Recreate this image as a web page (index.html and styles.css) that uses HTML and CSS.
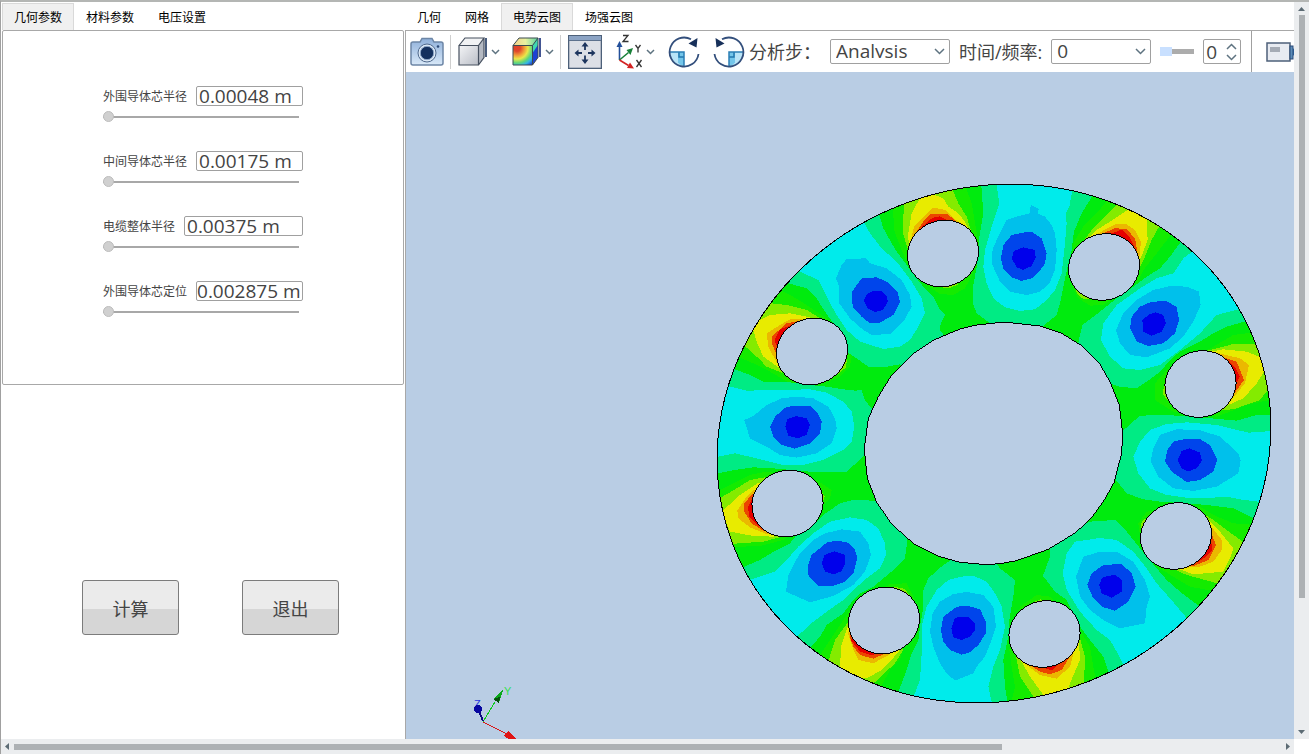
FILE: index.html
```html
<!DOCTYPE html>
<html lang="zh-CN">
<head>
<meta charset="utf-8">
<title>电势云图</title>
<link rel="stylesheet" href="styles.css">
</head>
<body>
<div class="window">
  <div class="content">
    <section class="side">
      <nav class="tabs">
        <button class="tab active" type="button">几何参数</button>
        <button class="tab" type="button">材料参数</button>
        <button class="tab" type="button">电压设置</button>
      </nav>
      <form class="params">
        <div class="param">
          <div class="param-row"><label for="p1">外围导体芯半径</label><input class="value" id="p1" type="text" value="0.00048 m"></div>
          <input class="slider" type="range" min="0" max="100" value="0" aria-label="外围导体芯半径">
        </div>
        <div class="param">
          <div class="param-row"><label for="p2">中间导体芯半径</label><input class="value" id="p2" type="text" value="0.00175 m"></div>
          <input class="slider" type="range" min="0" max="100" value="0" aria-label="中间导体芯半径">
        </div>
        <div class="param">
          <div class="param-row"><label for="p3">电缆整体半径</label><input class="value" id="p3" type="text" value="0.00375 m"></div>
          <input class="slider" type="range" min="0" max="100" value="0" aria-label="电缆整体半径">
        </div>
        <div class="param">
          <div class="param-row"><label for="p4">外围导体芯定位</label><input class="value full" id="p4" type="text" value="0.002875 m"></div>
          <input class="slider" type="range" min="0" max="100" value="0" aria-label="外围导体芯定位">
        </div>
      </form>
      <div class="actions">
        <button class="push" type="button">计算</button>
        <button class="push" type="button">退出</button>
      </div>
    </section>

    <section class="main">
      <nav class="tabs">
        <button class="tab" type="button">几何</button>
        <button class="tab" type="button">网格</button>
        <button class="tab active" type="button">电势云图</button>
        <button class="tab" type="button">场强云图</button>
      </nav>
      <div class="toolbar">
        <button class="tool" type="button" aria-label="截图">
          <svg width="34" height="30" viewBox="0 0 34 30">
            <defs><linearGradient id="cam" x1="0" y1="0" x2="0" y2="1"><stop offset="0" stop-color="#8fb0da"/><stop offset="1" stop-color="#d8e8f8"/></linearGradient></defs>
            <path d="M1 7q0-2 2-2h7l2-3.500h10l2 3.500h7q2 0 2 2v19q0 2-2 2h-28q-2 0-2-2z" fill="url(#cam)" stroke="#6d86a6" stroke-width="1.500"/>
            <circle cx="17" cy="16" r="9" fill="#dce9f7" stroke="#50698c"/>
            <circle cx="17" cy="16" r="6.700" fill="#14305e" stroke="#8fa8c8"/>
            <circle cx="28" cy="9.500" r="1.300" fill="#2d4a78"/>
          </svg>
        </button>
        <span class="sep"></span>
        <button class="tool menu" type="button" aria-label="显示模式">
          <svg width="30" height="32" viewBox="0 0 30 32">
            <defs><linearGradient id="cube" x1="0" y1="0" x2="1" y2="1"><stop offset="0" stop-color="#f4f5f7"/><stop offset="1" stop-color="#b9bdc6"/></linearGradient></defs>
            <path d="M1 9.500h19.500v19.500h-19.500z" fill="url(#cube)"/><path d="M1 9.500l6-7.500h19l-5.500 7.500z" fill="#f1f2f4"/><path d="M20.500 9.500l5.500-7.500v19.500l-5.500 7.500z" fill="#b4b9c2"/>
            <path d="M1 9.500h19.500v19.500h-19.500zM1 9.500l6-7.500h19l-5.500 7.500M26 2v19.500l-5.500 7.500" fill="none" stroke="#46505f" stroke-width="1.200"/><path d="M28 2v19" stroke="#1d355e" stroke-width="1.600"/>
          </svg>
          <svg class="chev" width="9" height="6" viewBox="0 0 9 6"><path d="M1 1l3.500 3.500l3.500-3.500"/></svg>
        </button>
        <button class="tool menu" type="button" aria-label="云图">
          <svg width="30" height="32" viewBox="0 0 30 32">
            <defs><radialGradient id="heat" gradientUnits="userSpaceOnUse" cx="5" cy="12" r="22"><stop offset="0.150" stop-color="#e0442a"/><stop offset="0.350" stop-color="#f1a33a"/><stop offset="0.500" stop-color="#e9e84a"/><stop offset="0.680" stop-color="#5fd67a"/><stop offset="0.820" stop-color="#35b6e8"/><stop offset="1" stop-color="#1c3cd0"/></radialGradient>
            <linearGradient id="top" x1="0" y1="0" x2="1" y2="0"><stop offset="0" stop-color="#f3cf8b"/><stop offset="0.500" stop-color="#e9f2a0"/><stop offset="1" stop-color="#55d5a0"/></linearGradient></defs>
            <path d="M1 9.500h19.500v19.500h-19.500z" fill="url(#heat)"/><path d="M1 9.500l6-7.500h19l-5.500 7.500z" fill="url(#top)"/><path d="M20.500 9.500l5.500-7.500v19.500l-5.500 7.500z" fill="#1d42d4"/><path d="M20.500 9.500l5.500-7.500v7l-5.500 8z" fill="#3fd7b0"/>
            <path d="M1 9.500h19.500v19.500h-19.500zM1 9.500l6-7.500h19l-5.500 7.500M26 2v19.500l-5.500 7.500" fill="none" stroke="#3c4a50"/><path d="M28 2v19" stroke="#142a78" stroke-width="1.600"/>
          </svg>
          <svg class="chev" width="9" height="6" viewBox="0 0 9 6"><path d="M1 1l3.500 3.500l3.500-3.500"/></svg>
        </button>
        <span class="sep"></span>
        <button class="tool" type="button" aria-label="适应窗口">
          <svg width="34" height="34" viewBox="0 0 34 34">
            <rect x="0.500" y="0.500" width="33" height="33" fill="#dcdfe6" stroke="#4d6079" stroke-width="1.600"/><rect x="1" y="1" width="32" height="4" fill="#8ba3c4"/><path d="M1 5.500h32" stroke="#5d718d"/>
            <g stroke="#1d355e" stroke-width="1.800" fill="#1d355e"><path d="M17 9.500v5.500M17 20.500v5.500M8.500 18h5.500M20 18h5.500"/><path d="M17 7l-3.500 4.500h7zM17 29l-3.500-4.500h7zM6.500 18l4-3.500v7zM27.500 18l-4-3.500v7z" stroke="none"/></g>
          </svg>
        </button>
        <button class="tool menu axes" type="button" aria-label="视图方向">
          <svg width="27" height="36" viewBox="0 0 27 36">
            <path d="M3.500 26v-15" stroke="#24509a" stroke-width="1.600"/><path d="M3.500 7l-3 6h6z" fill="#24509a"/>
            <path d="M3.500 26l9-7.500" stroke="#188038" stroke-width="1.600"/><path d="M17 14l-6.500 2l4 5z" fill="#188038"/>
            <path d="M3.500 26l9 5.500" stroke="#d32222" stroke-width="1.600"/><path d="M18 34.500l-7-.5l3-5.500z" fill="#d32222"/>
            <path d="M7 1.500h5l-5 6h5.500M19.500 11l2.500 3.500l2.500-3.500M22 14.500v4M20.500 26l5 7M25.500 26l-5 7" fill="none" stroke="#333" stroke-width="1.300"/>
          </svg>
          <svg class="chev" width="9" height="6" viewBox="0 0 9 6"><path d="M1 1l3.500 3.500l3.500-3.500"/></svg>
        </button>
        <button class="tool turn" type="button" aria-label="顺时针旋转">
          <svg width="32" height="32" viewBox="0 0 32 32">
            <path d="M1.500 16h14.500v14.500a14.500 14.500 0 0 1-14.500-14.500z" fill="#b9e4f7"/><path d="M10 16h6v14.500q-4-1-6-4z" fill="#74c6ea"/><path d="M11 16v5h5" fill="none" stroke="#2277ad" stroke-width="1.500"/><path d="M1.500 16h14.500v14.500" fill="none" stroke="#2b7fb5" stroke-width="1.500"/>
            <path d="M23 3.300a14.500 14.500 0 1 0 7.500 14.700" fill="none" stroke="#334f7c" stroke-width="1.800"/><path d="M29.500 2l-1 9.500l-8-4z" fill="#17305a"/>
          </svg>
        </button>
        <button class="tool turn" type="button" aria-label="逆时针旋转">
          <svg width="32" height="32" viewBox="0 0 32 32">
            <path d="M30.500 16h-14.500v14.500a14.500 14.500 0 0 0 14.500-14.500z" fill="#b9e4f7"/><path d="M22 16h-6v14.500q4-1 6-4z" fill="#74c6ea"/><path d="M21 16v5h-5" fill="none" stroke="#2277ad" stroke-width="1.500"/><path d="M30.500 16h-14.500v14.500" fill="none" stroke="#2b7fb5" stroke-width="1.500"/>
            <path d="M9 3.300a14.500 14.500 0 1 1-7.500 14.700" fill="none" stroke="#334f7c" stroke-width="1.800"/><path d="M2.500 2l1 9.500l8-4z" fill="#17305a"/>
          </svg>
        </button>
        <label class="caption step-caption" for="step">分析步：</label>
        <span class="combo step"><select id="step"><option>Analysis</option></select><svg class="chev" width="11" height="7" viewBox="0 0 11 7"><path d="M1 1l4.500 4.500l4.500-4.500"/></svg></span>
        <label class="caption" for="time">时间/频率:</label>
        <span class="combo time"><select id="time"><option>0</option></select><svg class="chev" width="11" height="7" viewBox="0 0 11 7"><path d="M1 1l4.500 4.500l4.500-4.500"/></svg></span>
        <input class="frame-slider" type="range" min="0" max="10" value="0" aria-label="帧">
        <span class="spin">
          <input type="text" value="0" aria-label="帧号">
          <span class="spin-btns">
            <button type="button" aria-label="增加"><svg width="11" height="7" viewBox="0 0 11 7"><path d="M1 6l4.500-4.500l4.500 4.500"/></svg></button>
            <button type="button" aria-label="减少"><svg width="11" height="7" viewBox="0 0 11 7"><path d="M1 1l4.500 4.500l4.500-4.500"/></svg></button>
          </span>
        </span>
        <span class="sep dark"></span>
        <button class="tool video" type="button" aria-label="录制">
          <svg width="34" height="20" viewBox="0 0 34 20">
            <rect x="1" y="1" width="23" height="18" fill="#e8ebf1" stroke="#4d6079" stroke-width="1.500"/><rect x="4" y="5" width="10" height="5" fill="#a5abb5"/><rect x="24" y="4" width="3" height="13" fill="#5b8cb8" stroke="#2a4a78"/><path d="M27 7l6-5v16l-6-5z" fill="#2a5a90"/>
          </svg>
        </button>
      </div>

      <div class="viewport">
        <svg class="scene" viewBox="406 72 888 667" shape-rendering="crispEdges">
          <defs><clipPath id="disc"><ellipse rx="280" ry="256" transform="translate(994 443.500) rotate(-21.500)"/></clipPath></defs>
          <g clip-path="url(#disc)">
            <rect x="700" y="170" width="590" height="550" fill="#00eb0e"/>
            <g transform="translate(710 170) scale(.33333)">
              <path class="c6" d="M548 80L552 180 575 240 600 300 650 345 690 372 730 375 765 355 800 290 806 220 795 160 785 100 760 30zM170 340L240 375 290 405 350 445 400 500 425 560 420 590 390 620 330 645 240 640 180 605 130 580 60 550z"/>
              <path class="c4" d="M200 325L235 340 290 355 320 385 345 425 370 460 400 500 410 545 440 565 475 590 530 590 570 583 640 620 720 520 690 480 692 460 705 435 690 420 670 380 640 350 600 300 590 285 560 245 545 220 520 175 505 125 480 100z"/>
              <path class="c3" d="M240 290L270 305 325 330 355 390 380 435 410 480 450 515 520 537 570 530 600 510 625 470 645 430 635 385 605 335 560 275 515 235 480 190 455 145 400 130z"/>
              <path class="c2" d="M410 267L468 265 480 280 530 295 575 330 600 375 605 410 580 455 540 492 485 495 460 480 420 445 388 400 388 350 378 325 395 285z"/>
              <path class="c1" d="M455 325L500 322 530 335 563 368 570 395 550 435 510 458 480 460 455 440 428 412 426 365z"/>
              <path class="c0" d="M490 363L515 363 530 380 534 395 518 420 495 426 472 415 462 392 470 373z"/>
              <path class="c4" d="M50 590L72 597 120 615 160 635 240 637 300 645 350 650 400 658 435 662 455 660 465 690 500 735 500 850 462 858 410 905 300 905 190 895 130 892 75 900 0 915z"/>
              <path class="c3" d="M30 645L55 648 110 662 200 660 300 658 350 668 400 695 425 725 433 770 425 815 400 840 340 870 280 885 220 885 140 865 75 850 0 865z"/>
              <path class="c2" d="M215 685L260 680 310 685 355 710 375 745 380 775 365 820 320 850 260 863 210 855 170 830 120 805 103 750 130 738 170 705z"/>
              <path class="c1" d="M230 710L300 707 320 725 335 755 330 790 300 820 255 836 215 825 190 800 180 770 195 740z"/>
              <path class="c0" d="M258 738L290 745 300 765 290 795 262 805 235 797 226 770 232 748z"/>
              <path class="c7" d="M583 80L578 185 592 235 700 250 785 190 770 140 745 100 722 45zM690 345L700 354 720 354 745 343zM165 398L230 405 290 420 335 447 305 544 215 608 170 590 140 560 90 515zM411 570L408 592 385 612 305 544z"/>
              <path class="c8" d="M635 75L605 130 593 200 600 225 700 250 775 175 765 155 745 130 715 110 700 85 675 75zM145 452L180 435 240 430 300 442 305 544 205 592 160 560 140 515 130 480z"/>
              <path class="c9" d="M603 210L612 170 640 140 670 113 705 120 730 145 762 165 700 250zM290 446L240 448 210 465 170 490 175 530 200 577 305 544z"/>
              <path class="c10" d="M618 187L640 155 660 132 710 131 738 153 700 250zM262 454L230 460 185 500 185 520 201 555 305 544z"/>
              <path class="c11" d="M636 170L668 143 690 139 715 152 700 250zM242 466L210 478 193 510 202 532 305 544z"/>
            </g>
            <g transform="translate(1000 170) scale(.33333)">
              <path class="c6" d="M330 80L290 130 250 170 222 215 205 300 215 345 235 385 270 407 310 405 415 330 430 300 470 250 520 185zM780 485L700 495 640 530 500 600 465 640 465 690 520 725 650 740 690 725 740 705 830 685z"/>
              <path class="c4" d="M-58 20L-50 130-62 200-70 290-80 345-82 400-70 430-10 475 115 480 170 435 180 400 190 350 205 280 215 240 222 185 245 130 285 65z"/>
              <path class="c3" d="M220 45L208 110 197 130 200 160 195 220 185 310 165 360 140 390 105 418 60 423 15 412-20 385-40 340-50 290-45 240-25 170-2 100-12 30z"/>
              <path class="c2" d="M92 105L117 117 112 130 135 140 155 165 165 190 170 240 165 300 148 340 120 365 80 375 30 365 0 335-25 280-22 235 0 190 20 150 50 140 90 130z"/>
              <path class="c1" d="M75 187L98 187 125 205 140 250 135 280 118 305 95 325 65 333 35 322 10 295 3 265 10 225 35 195z"/>
              <path class="c0" d="M70 232L105 240 107 262 95 288 70 300 50 292 35 265 42 243z"/>
              <path class="c4" d="M230 540L247 465 300 425 350 385 400 350 440 320 480 295 510 260 550 205 760 447 680 470 640 490 600 515 540 545 520 560 480 605 440 635 410 655 360 650 310 635z"/>
              <path class="c3" d="M590 235L550 265 520 310 470 325 420 355 350 405 310 460 303 510 330 560 370 595 420 600 480 585 540 540 600 490 650 435 740 412z"/>
              <path class="c2" d="M460 360L510 348 560 350 597 365 602 405 580 455 550 500 510 535 440 562 390 555 360 520 348 480 370 430 410 390z"/>
              <path class="c1" d="M450 397L495 392 530 410 537 450 525 490 490 520 445 528 410 515 390 475 395 440 420 410z"/>
              <path class="c0" d="M450 432L467 427 490 435 498 460 485 485 455 497 430 485 427 450z"/>
              <path class="c7" d="M365 90L310 145 275 180 255 207 311 291 420 290 435 260 455 210 480 165zM225 362L245 385 290 390 300 340zM775 522L700 522 620 543 601 641 660 720 700 718 780 690 815 645zM494 640L488 670 505 695 560 641z"/>
              <path class="c8" d="M390 115L330 155 290 180 268 202 311 291 415 280 430 245 443 210 440 145zM790 565L740 545 670 538 630 545 601 641 678 708 730 685 770 640 795 600z"/>
              <path class="c9" d="M285 195L345 163 380 163 405 180 423 215 418 262 311 291zM650 548L720 565 747 585 735 640 685 700 601 641z"/>
              <path class="c10" d="M308 191L345 174 380 178 405 205 412 245 311 291zM675 563L710 575 732 630 703 670 601 641z"/>
              <path class="c11" d="M333 191L365 179 390 203 402 228 311 291zM685 574L707 593 719 620 708 642 601 641z"/>
            </g>
            <g transform="translate(710 440) scale(.33333)">
              <path class="c6" d="M10 160L70 130 120 105 170 95 320 120 365 150 360 175 300 240 220 300 150 318 40 322zM320 660L380 570 420 510 540 432 590 430 615 480 570 660 540 690 500 765z"/>
              <path class="c4" d="M80 390L150 360 200 330 240 310 260 285 310 255 340 225 390 190 430 180 520 183 595 280 585 355 550 390 520 415 490 440 450 460 430 480 400 520 350 555 330 590 285 640z"/>
              <path class="c3" d="M110 423L195 395 230 360 265 320 310 280 360 245 420 232 470 240 505 265 525 310 528 345 510 385 470 415 430 450 400 480 350 515 310 545 250 600z"/>
              <path class="c2" d="M345 280L395 268 450 275 475 310 483 345 465 395 430 435 370 468 300 487 228 455 235 405 250 375 270 340 310 300z"/>
              <path class="c1" d="M350 308L380 302 415 308 435 330 442 355 430 400 405 425 370 437 325 437 296 410 293 380 305 345z"/>
              <path class="c0" d="M373 334L405 345 406 370 395 393 372 404 345 395 335 370 343 345z"/>
              <path class="c4" d="M730 355L700 375 655 415 640 450 640 500 630 560 625 600 605 640 590 690 560 770 895 800 885 740 880 660 895 590 898 540 910 470 915 420 870 385 850 360z"/>
              <path class="c3" d="M755 410L790 407 830 425 855 460 875 500 885 560 870 630 850 680 835 740 848 800 605 785 630 720 635 640 635 560 650 500 680 450 715 420z"/>
              <path class="c2" d="M730 462L770 456 820 465 850 500 858 560 845 600 825 650 800 680 790 700 735 722 710 700 690 670 670 620 660 575 668 520 690 485z"/>
              <path class="c1" d="M740 500L775 498 810 508 828 545 827 580 805 615 780 637 755 644 720 630 700 605 693 570 700 530z"/>
              <path class="c0" d="M735 533L775 530 795 550 795 570 780 590 755 600 730 592 724 565z"/>
              <path class="c7" d="M20 180L80 145 120 120 165 112 232 190 213 291 160 305 60 312zM328 140L344 170 336 190 232 190zM350 680L375 600 415 545 521 540 580 630 555 670 480 740zM550 440L585 447 602 472 540 500z"/>
              <path class="c8" d="M35 215L90 165 145 128 232 190 192 290 130 288 60 275zM390 690L393 620 413 560 521 540 568 633 540 665 515 690 470 715 430 710z"/>
              <path class="c9" d="M82 212L110 170 132 148 232 190 175 284 120 262 85 235zM413 578L430 630 445 660 490 670 552 636 521 540z"/>
              <path class="c10" d="M103 190L127 162 232 190 162 274 125 250 103 215zM418 587L430 620 450 645 490 656 528 640 521 540z"/>
              <path class="c11" d="M114 200L127 174 232 190 145 257 117 228zM422 600L450 634 485 646 502 639 521 540z"/>
            </g>
            <g transform="translate(1000 440) scale(.33333)">
              <path class="c6" d="M765 255L700 250 640 225 600 200 440 215 415 250 422 300 480 385 520 410 570 440 650 455zM30 800L45 740 35 680 28 630 60 500 110 465 150 470 240 570 270 620 280 680 290 730z"/>
              <path class="c4" d="M128 410L150 350 150 315 228 265 270 245 345 240 375 268 400 300 440 350 470 385 500 420 540 455 600 500 330 710 310 650 270 600 240 560 200 480 165 455 135 415z"/>
              <path class="c3" d="M225 305L300 294 350 300 400 335 440 385 470 430 510 475 565 540 375 685 350 635 330 600 290 570 240 515 200 450 188 400 200 340z"/>
              <path class="c2" d="M250 350L300 335 350 335 400 365 435 420 450 470 440 500 435 550 360 565 310 540 270 510 240 470 228 410z"/>
              <path class="c1" d="M310 375L365 372 395 400 407 440 385 485 345 512 305 500 280 475 262 435 275 400z"/>
              <path class="c0" d="M320 408L345 405 366 420 365 455 335 473 305 460 298 435 305 415z"/>
              <path class="c4" d="M360-20L420-73 500-75 600-68 710-58 770-75 830-75 770 240 700 205 620 195 560 190 480 185 430 178 380 160 340 110z"/>
              <path class="c3" d="M830-28L745-22 650-45 560-53 500-48 450-30 420 5 400 50 415 100 450 145 500 165 560 173 610 175 680 170 720 178 800 188z"/>
              <path class="c2" d="M480-15L530-32 600-30 660-10 715 40 722 60 715 100 650 140 580 153 520 145 475 110 452 65 460 25z"/>
              <path class="c1" d="M520 5L550-2 600-3 630 15 652 60 640 95 600 120 560 126 515 95 495 65 502 30z"/>
              <path class="c0" d="M545 33L568 25 600 38 606 62 590 85 565 94 545 85 533 60z"/>
              <path class="c7" d="M735 310L680 270 640 240 600 215 527 286 515 385 560 405 670 435zM445 232L425 243 423 268 500 286zM110 785L60 710 48 650 132 580 240 595 255 650 252 735zM80 497L120 478 155 482 132 530z"/>
              <path class="c8" d="M700 325L660 275 625 238 527 286 532 385 580 403 670 395 690 355zM130 765L90 710 62 660 132 580 237 605 240 660 210 730 205 748z"/>
              <path class="c9" d="M628 252L665 300 665 330 640 365 600 380 548 384 527 286zM66 664L120 705 170 716 210 680 226 620 132 580z"/>
              <path class="c10" d="M631 272L648 315 625 360 575 380 527 286zM92 676L120 695 150 703 185 690 214 642 132 580z"/>
              <path class="c11" d="M631 288L637 330 622 347 595 366 527 286zM118 680L155 691 196 656 132 580z"/>
            </g>
          </g>
          <ellipse class="edge" rx="280" ry="256" transform="translate(994 443.500) rotate(-21.500)"/>
          <path class="hole center" transform="translate(710 170) scale(.33333)" d="M863 458L800 465 750 477 672 510 612 550 545 615 505 680 475 745 463 835 466 870 472 925 500 997 545 1062 612 1122 683 1158 750 1177 830 1184 870 1181 920 1172 1015 1138 1098 1087 1145 1042 1180 995 1212 938 1235 850 1238 790 1228 705 1200 635 1167 578 1115 527 1055 490 990 468 900 458z"/>
          <g class="hole">
            <ellipse rx="36" ry="33" transform="translate(943 253.500) rotate(-21)"/>
            <ellipse rx="36" ry="33" transform="translate(812 351.500) rotate(-21)"/>
            <ellipse rx="36" ry="33" transform="translate(1104 267) rotate(-21)"/>
            <ellipse rx="36" ry="33" transform="translate(1200.500 384) rotate(-21)"/>
            <ellipse rx="36" ry="33" transform="translate(787.500 503.500) rotate(-21)"/>
            <ellipse rx="36" ry="33" transform="translate(884 620.500) rotate(-21)"/>
            <ellipse rx="36" ry="33" transform="translate(1176 536) rotate(-21)"/>
            <ellipse rx="36" ry="33" transform="translate(1044.500 634) rotate(-21)"/>
          </g>
          <g class="triad">
            <path d="M483 722L495 702" stroke="#0ccc1c"/><path d="M503 690L493 699 499 703z" fill="#0aa81a"/><path d="M500 697L493 699 499 703z" fill="#064f0c"/>
            <text x="504" y="695" fill="#36e052">Y</text>
            <text x="474" y="708" fill="#2836e0">Z</text>
            <path d="M483 721L479 711" stroke="#0a0a80" stroke-width="2"/><circle cx="478" cy="709" r="4" fill="#0606a0"/>
            <path d="M483 722L507 734" stroke="#d81818"/><path d="M518 740L508 731 504 736 510 740z" fill="#e01414"/>
          </g>
        </svg>
      </div>
    </section>
  </div>
  <div class="vbar">
    <button type="button" aria-label="向上"><svg width="7" height="4" viewBox="0 0 7 4"><path d="M3.500 0l3.500 4h-7z"/></svg></button>
    <div class="track"><div class="thumb"></div></div>
    <button type="button" aria-label="向下"><svg width="7" height="4" viewBox="0 0 7 4"><path d="M3.500 4l3.500-4h-7z"/></svg></button>
  </div>
  <div class="hbar">
    <button type="button" aria-label="向左"><svg width="4" height="7" viewBox="0 0 4 7"><path d="M0 3.500l4-3.500v7z"/></svg></button>
    <div class="track"><div class="thumb"></div></div>
    <button type="button" aria-label="向右"><svg width="4" height="7" viewBox="0 0 4 7"><path d="M4 3.500l-4-3.500v7z"/></svg></button>
  </div>
  <div class="corner"></div>
</div>
</body>
</html>
```
FILE: styles.css
```css
* { box-sizing: border-box; }
body {
  margin: 0;
  background: #fff;
  color: #444;
  font-family: "Open Sans", "Noto Sans CJK SC", sans-serif;
  font-size: 12px;
}
button, input, select { font: inherit; color: inherit; margin: 0; }
button { padding: 0; border: 0; background: none; }
svg { display: block; flex: none; }

.window {
  display: grid;
  grid-template-columns: minmax(0, 1fr) 15px;
  grid-template-rows: minmax(0, 1fr) 15px;
  height: 100vh;
  border-top: 2px solid #b4b6b4;
  border-left: 1px solid #a0a0a0;
  overflow: hidden;
}
.content { display: flex; min-width: 0; min-height: 0; }

.tabs { display: flex; height: 28px; padding-top: 1px; flex: none; }
.tab {
  padding: 0 11px;
  border: 1px solid transparent;
  border-bottom: 0;
  color: #000;
  line-height: 27px;
  white-space: nowrap;
}
.tab.active { background: #f0f0f0; border-color: #d9d9d9; }

.side { display: flex; flex-direction: column; flex: 0 0 403px; padding-left: 1px; }
.params {
  display: flex;
  flex-direction: column;
  gap: 28px;
  height: 355px;
  padding: 55px 100px 0;
  border: 1px solid #a8a8a8;
  border-radius: 2px;
}
.param { width: 200px; }
.param-row { display: flex; gap: 9px; height: 20px; }
.param-row label { line-height: 22px; white-space: nowrap; }
.value {
  flex: 1;
  min-width: 0;
  height: 20px;
  padding: 0 2px;
  border: 1px solid #a0a0a0;
  border-radius: 2px;
  background: #fff;
  font-size: 19px;
  line-height: 18px;
}
.value.full { padding: 0; }
.slider { appearance: none; display: block; width: 196px; height: 12px; margin: 5px 0 0; background: none; }
.slider::-webkit-slider-runnable-track { height: 2px; background: #a8a8a8; }
.slider::-webkit-slider-thumb {
  appearance: none;
  width: 11px;
  height: 11px;
  margin-top: -5px;
  border: 1px solid #bdbdbd;
  border-radius: 50%;
  background: #d0d0d0;
}
.actions { display: flex; gap: 63px; padding: 195px 0 0 80px; }
.push {
  width: 97px;
  height: 55px;
  border: 1px solid #7c7c7c;
  border-radius: 3px;
  background: linear-gradient(#ebebeb 52%, #d6d6d6 52%);
  font-size: 18px;
}

.main { display: flex; flex-direction: column; flex: 1; min-width: 0; padding-left: 1px; }
.toolbar {
  display: flex;
  align-items: center;
  flex: none;
  height: 42px;
  padding-left: 4px;
  border-top: 1px solid #a8a8a8;
  border-left: 1px solid #a8a8a8;
  overflow: hidden;
  font-size: 18px;
}
.tool { display: flex; align-items: center; flex: none; }
.menu { gap: 3px; }
.menu + .menu { margin-left: 12px; }
.menu.axes { margin: 0 13px 0 14px; }
.turn { margin-right: 13px; }
.turn + .turn { margin-right: 4px; }
.chev path, .spin path { fill: none; stroke: #5e7380; stroke-width: 1.5; }
.sep { flex: none; width: 1px; height: 34px; margin: 0 7px 0 6px; background: #cfcfcf; }
.sep.dark { height: 42px; margin: 0 14px 0 10px; background: #a0a0a0; }
.caption { flex: none; white-space: nowrap; line-height: 24px; }
.step-caption { width: 81px; }
.combo {
  position: relative;
  flex: none;
  height: 25px;
  border: 1px solid #a0a0a0;
  border-radius: 2px;
  font-size: 19px;
}
.combo.step { width: 120px; margin-right: 9px; }
.combo.time { width: 100px; margin: 0 9px; }
.combo select {
  appearance: none;
  display: block;
  width: 100%;
  height: 23px;
  padding: 0 24px 0 5px;
  border: 0;
  background: none;
  line-height: 23px;
  clip-path: inset(0 0 5px 0);
}
.combo .chev { position: absolute; right: 4px; top: 8px; pointer-events: none; }
.frame-slider { appearance: none; flex: none; width: 34px; height: 10px; background: none; }
.frame-slider::-webkit-slider-runnable-track { height: 5px; background: #acacac; }
.frame-slider::-webkit-slider-thumb { appearance: none; width: 12px; height: 9px; margin-top: -2px; background: #c9e0ff; }
.spin {
  display: flex;
  align-items: center;
  flex: none;
  width: 38px;
  height: 25px;
  margin-left: 9px;
  border: 1px solid #a0a0a0;
  border-radius: 2px;
  font-size: 19px;
}
.spin input { width: 20px; height: 23px; padding: 0 0 0 2px; border: 0; background: none; }
.spin-btns { display: flex; flex-direction: column; gap: 4px; padding-left: 2px; }
.spin-btns button { display: block; }

.viewport { flex: 1; min-height: 0; background: #b9cde4; border-left: 1px solid #a8a8a8; overflow: hidden; }
.scene { width: 100%; height: 100%; }
.edge { fill: none; stroke: #000; }
.hole { fill: #b9cde4; stroke: #000; }
.hole.center { stroke-width: 3; }
.triad { fill: none; font-family: "Liberation Sans", sans-serif; font-size: 11px; }
.c0 { fill: #0000eb; }
.c1 { fill: #0045eb; }
.c2 { fill: #00c0eb; }
.c3 { fill: #00ebeb; }
.c4 { fill: #00eb84; }
.c6 { fill: #14eb00; }
.c7 { fill: #84eb00; }
.c8 { fill: #e8eb00; }
.c9 { fill: #ebb800; }
.c10 { fill: #eb4500; }
.c11 { fill: #e60000; }

.vbar, .hbar { display: flex; align-items: center; background: #ebedef; }
.vbar { flex-direction: column; padding: 5px 0; }
.hbar { padding: 0 4px; }
.vbar svg, .hbar svg { fill: #5c6b74; }
.vbar .track { flex: 1; width: 6px; margin: 4px 0; }
.hbar .track { flex: 1; height: 6px; margin: 0 5px; }
.thumb { background: #adb1b4; }
.vbar .thumb { height: 82%; }
.hbar .thumb { width: 78%; height: 6px; }
.corner { background: #fff; }
```
